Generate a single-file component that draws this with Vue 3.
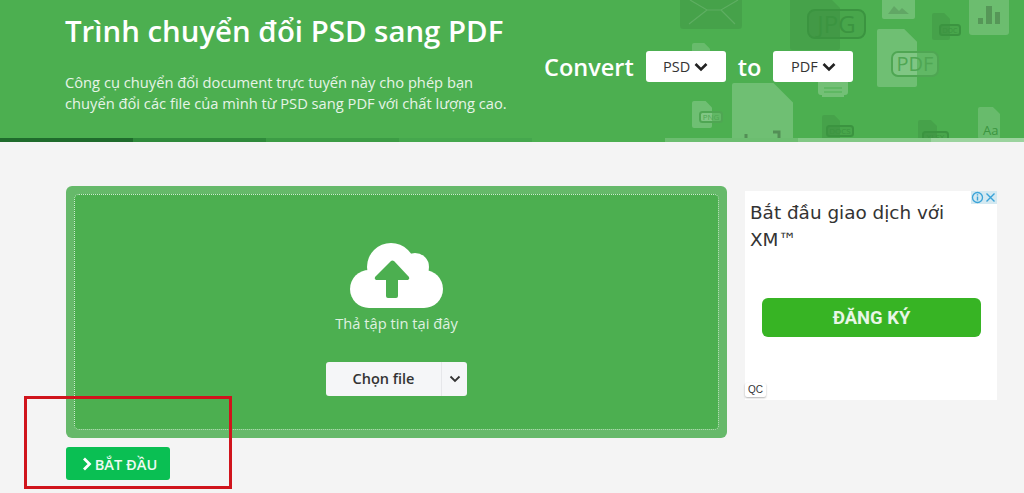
<script setup>
// background file icons: x, y, w, h, badge label, light or dark
const docs = [
  { x: 790, y: -8, w: 50, h: 58, label: "JPG", bx: 808, by: 10, bw: 57, bh: 28, size: 24, tone: "dark" },
  { x: 932, y: 13, w: 18, h: 27, label: "DOC", bx: 940, by: 25, bw: 20, bh: 10, size: 7, tone: "dark" },
  { x: 877, y: 29, w: 40, h: 58, label: "PDF", bx: 892, by: 52, bw: 46, bh: 24, size: 20, tone: "light" },
  { x: 692, y: 43, w: 18, h: 26, label: "", tone: "faint" },
  { x: 692, y: 101, w: 20, h: 27, label: "PNG", bx: 700, by: 112, bw: 22, bh: 10, size: 8, tone: "light" },
  { x: 732, y: 83, w: 61, h: 80, label: "", tone: "light" },
  { x: 822, y: 115, w: 18, h: 28, label: "DOCS", bx: 827, by: 126, bw: 26, bh: 10, size: 8, tone: "dark" },
  { x: 918, y: 120, w: 19, h: 28, label: "XLSX", bx: 923, by: 132, bw: 25, bh: 10, size: 8, tone: "dark" },
  { x: 978, y: 107, w: 22, h: 32, label: "", tone: "faint" },
];

const segments = [
  "#1f6b2c", "#2f8a3b", "#3c9c45", "#45a74d",
  "#4caf50", "#6cbd70", "#82c885", "#9bd39e",
];

function docPath(d) {
  const fold = d.w * 0.32;
  return `M${d.x + 2} ${d.y}H${d.x + d.w - fold}L${d.x + d.w} ${d.y + fold}V${d.y + d.h - 2}Q${d.x + d.w} ${d.y + d.h} ${d.x + d.w - 2} ${d.y + d.h}H${d.x + 2}Q${d.x} ${d.y + d.h} ${d.x} ${d.y + d.h - 2}V${d.y + 2}Q${d.x} ${d.y} ${d.x + 2} ${d.y}Z`;
}
</script>

<template>
  <div class="page">
    <header class="hero">
      <svg class="hero-icons" width="1024" height="142" viewBox="0 0 1024 142" aria-hidden="true">
        <!-- envelope -->
        <rect x="680" y="-10" width="62" height="39" rx="3" fill="#000" fill-opacity="0.07" />
        <path d="M690 0l17 10h14l17-10M689 24l18-14M735 24l-14-14" fill="none" stroke="#fff" stroke-opacity="0.13" stroke-width="1.2" />
        <!-- image -->
        <rect x="882" y="-6" width="33" height="25" rx="2" fill="#fff" fill-opacity="0.2" />
        <path d="M888 14l6-8 5 5 3-3 7 6z" fill="#000" fill-opacity="0.12" />
        <!-- chart -->
        <rect x="969" y="-6" width="40" height="41" rx="3" fill="#fff" fill-opacity="0.18" />
        <path d="M978 18h5v6h-5zM986 6h6v18h-6zM995 12h5v12h-5z" fill="#000" fill-opacity="0.2" />
        <!-- printer -->
        <path d="M818 82h30v10q0 3-3 3h-1v2h-22v-2h-1q-3 0-3-3z" fill="#fff" fill-opacity="0.22" />
        <path d="M824 88h18M824 92h18" stroke="#4caf50" stroke-width="1.2" />
        <g v-for="d in docs" :key="d.x">
          <path :d="docPath(d)" :class="d.tone" />
          <template v-if="d.label">
            <rect
              :x="d.bx"
              :y="d.by"
              :width="d.bw"
              :height="d.bh"
              :rx="d.bh / 4"
              class="badge"
              :class="d.tone"
            />
            <text
              :x="d.bx + d.bw / 2"
              :y="d.by + d.bh / 2 + d.size * 0.36"
              :font-size="d.size"
              text-anchor="middle"
              class="badge-text"
              :class="d.tone"
            >{{ d.label }}</text>
          </template>
        </g>
        <text x="983" y="135" font-size="13" class="badge-text dark">Aa</text>
        <path d="M746 134v4M773 132h6v6" stroke="#000" stroke-opacity="0.25" stroke-width="3" fill="none" />
      </svg>

      <div class="hero-text">
        <h1>Trình chuyển đổi PSD sang PDF</h1>
        <p>Công cụ chuyển đổi document trực tuyến này cho phép bạn<br />chuyển đổi các file của mình từ PSD sang PDF với chất lượng cao.</p>
      </div>

      <div class="converter">
        <span class="conv-label">Convert</span>
        <div class="format">
          PSD
          <svg width="14" height="10" viewBox="0 0 14 10"><path d="M1.5 2l5.5 5.5L12.5 2" fill="none" stroke="#222" stroke-width="2.6" /></svg>
        </div>
        <span class="conv-label">to</span>
        <div class="format">
          PDF
          <svg width="14" height="10" viewBox="0 0 14 10"><path d="M1.5 2l5.5 5.5L12.5 2" fill="none" stroke="#222" stroke-width="2.6" /></svg>
        </div>
      </div>

      <div class="steps">
        <span v-for="c in segments" :key="c" :style="{ background: c }"></span>
      </div>
    </header>

    <main class="content">
      <section class="left">
        <div class="drop-outer">
          <div class="drop-inner">
            <svg class="cloud" width="94" height="66" viewBox="0 0 94 66">
              <g fill="#fff">
                <circle cx="19" cy="46" r="19" />
                <circle cx="41" cy="24" r="24" />
                <circle cx="65" cy="24" r="14" />
                <circle cx="74" cy="46" r="19" />
                <rect x="19" y="30" width="55" height="35" />
              </g>
              <path d="M38 55q-2 0-2-2V37H26q-2-1-1-3l16-16q1-1 3 0l15 16q1 2-1 3H48v16q0 2-2 2z" fill="#4caf50" />
            </svg>
            <div class="drop-hint">Thả tập tin tại đây</div>
            <div class="choose">
              <span class="choose-main">Chọn file</span>
              <span class="choose-caret">
                <svg width="12" height="8" viewBox="0 0 12 8"><path d="M1.5 1.5L6 6l4.5-4.5" fill="none" stroke="#333" stroke-width="1.8" /></svg>
              </span>
            </div>
          </div>
        </div>
        <button class="start">
          <svg width="10" height="14" viewBox="0 0 10 14"><path d="M2 1.5L7.5 7 2 12.5" fill="none" stroke="#fff" stroke-width="2.8" /></svg>
          BẮT ĐẦU
        </button>
      </section>

      <aside class="ad">
        <div class="ad-flags">
          <svg width="13" height="13" viewBox="0 0 13 13"><circle cx="6.5" cy="6.5" r="5" fill="none" stroke="#3aa3d8" stroke-width="1.3" /><path d="M6.5 5.5v4M6.5 3.2v1.2" stroke="#3aa3d8" stroke-width="1.4" /></svg>
          <svg width="13" height="13" viewBox="0 0 13 13"><path d="M2.5 2.5l8 8M10.5 2.5l-8 8" stroke="#3aa3d8" stroke-width="1.4" /></svg>
        </div>
        <div class="ad-title">Bắt đầu giao dịch với XM™</div>
        <div class="ad-btn">ĐĂNG KÝ</div>
        <span class="ad-tag">QC</span>
      </aside>
    </main>

    <!-- red annotation box drawn over the screenshot -->
    <div class="annotation"></div>
  </div>
</template>

<style>
html,
body {
  margin: 0;
  overflow: hidden;
}
</style>

<style scoped>
.page {
  position: relative;
  width: 1024px;
  height: 493px;
  overflow: hidden;
  background: #f4f4f4;
  font-family: "Open Sans", "Noto Sans", sans-serif;
}

.hero {
  position: relative;
  height: 142px;
  background: #4caf50;
  color: #fff;
  display: flex;
  box-sizing: border-box;
  padding-left: 65px;
}

.hero-icons {
  position: absolute;
  left: 0;
  top: 0;
}

.hero-icons .dark {
  fill: #000;
  fill-opacity: 0.07;
}

.hero-icons .light {
  fill: #fff;
  fill-opacity: 0.2;
}

.hero-icons .faint {
  fill: #fff;
  fill-opacity: 0.16;
}

.hero-icons .badge {
  stroke-width: 2;
}

.hero-icons .badge.dark {
  stroke: #3b9440;
  fill-opacity: 0.05;
}

.hero-icons .badge.light {
  stroke: #4fa653;
  fill-opacity: 0.12;
}

.hero-icons .badge-text {
  font-family: "Open Sans", sans-serif;
  fill-opacity: 1;
}

.hero-icons .badge-text.dark {
  fill: #3b9440;
}

.hero-icons .badge-text.light {
  fill: #4fa653;
}

.hero-text {
  position: relative;
  width: 479px;
}

.hero-text h1 {
  margin: 11px 0 0;
  font-size: 29.4px;
  line-height: 41px;
  font-weight: 600;
  white-space: nowrap;
}

.hero-text p {
  margin: 20px 0 0;
  font-size: 14.7px;
  line-height: 21px;
  white-space: nowrap;
  color: #e6f4e7;
}

.converter {
  position: relative;
  display: flex;
  align-items: center;
  gap: 12px;
  height: 31px;
  margin-top: 51px;
}

.conv-label {
  font-size: 23.5px;
  font-weight: 600;
}

.format {
  width: 80px;
  height: 31px;
  box-sizing: border-box;
  background: #fff;
  border-radius: 3px;
  color: #333;
  font-size: 14.5px;
  display: flex;
  align-items: center;
  justify-content: center;
  gap: 4px;
}

.steps {
  position: absolute;
  left: 0;
  right: 0;
  bottom: 0;
  height: 4px;
  display: grid;
  grid-template-columns: repeat(8, 133px);
}

.content {
  display: flex;
  padding: 44px 0 0 66px;
  gap: 18px;
}

.left {
  width: 661px;
}

.drop-outer {
  height: 252px;
  box-sizing: border-box;
  padding: 8px;
  background: #66b96a;
  border-radius: 6px;
}

.drop-inner {
  height: 100%;
  box-sizing: border-box;
  background: #4caf50;
  border: 1px dotted #cfe9d0;
  border-radius: 5px;
  display: flex;
  flex-direction: column;
  align-items: center;
  padding-top: 48px;
}

.cloud {
  display: block;
}

.drop-hint {
  margin-top: 4px;
  font-size: 14.7px;
  line-height: 20px;
  color: #dff1e0;
}

.choose {
  margin-top: 29px;
  height: 34px;
  display: flex;
  background: #f5f6f8;
  border-radius: 3px;
  color: #333;
}

.choose-main {
  width: 115px;
  font-size: 14.5px;
  font-weight: 600;
  line-height: 34px;
  text-align: center;
}

.choose-caret {
  width: 25px;
  border-left: 1px solid #e6e7ea;
  display: flex;
  align-items: center;
  justify-content: center;
}

.start {
  margin-top: 9px;
  width: 104px;
  height: 33px;
  padding: 0 0 0 3px;
  border: none;
  border-radius: 3px;
  background: #0abf53;
  color: #eefaf2;
  font-family: inherit;
  font-size: 14.6px;
  font-weight: 600;
  display: flex;
  align-items: center;
  justify-content: center;
  gap: 3px;
}

.ad {
  position: relative;
  width: 252px;
  height: 209px;
  margin-top: 5px;
  background: #fff;
}

.ad-flags {
  position: absolute;
  top: 0;
  right: 0;
  display: flex;
  background: #d4e9f1;
  height: 13px;
  align-items: center;
}

.ad-title {
  padding: 8px 20px 0 5px;
  font-family: "DejaVu Sans", sans-serif;
  font-size: 18.4px;
  line-height: 27px;
  color: #333;
}

.ad-btn {
  position: absolute;
  left: 17px;
  top: 107px;
  width: 219px;
  height: 39px;
  border-radius: 6px;
  background: #37b424;
  color: #e8f6e6;
  font-family: Roboto, sans-serif;
  font-size: 18.4px;
  font-weight: 700;
  line-height: 39px;
  text-align: center;
}

.ad-tag {
  position: absolute;
  left: 0;
  bottom: 3px;
  padding: 0 3px;
  height: 14px;
  line-height: 14px;
  font-family: Arial, "Liberation Sans", sans-serif;
  font-size: 10px;
  color: #333;
  background: #fff;
  border-radius: 2px;
  box-shadow: 0 1px 2px rgba(0, 0, 0, 0.3);
}

.annotation {
  position: absolute;
  left: 24px;
  top: 396px;
  width: 208px;
  height: 93px;
  box-sizing: border-box;
  border: 3px solid #d0141c;
}
</style>
